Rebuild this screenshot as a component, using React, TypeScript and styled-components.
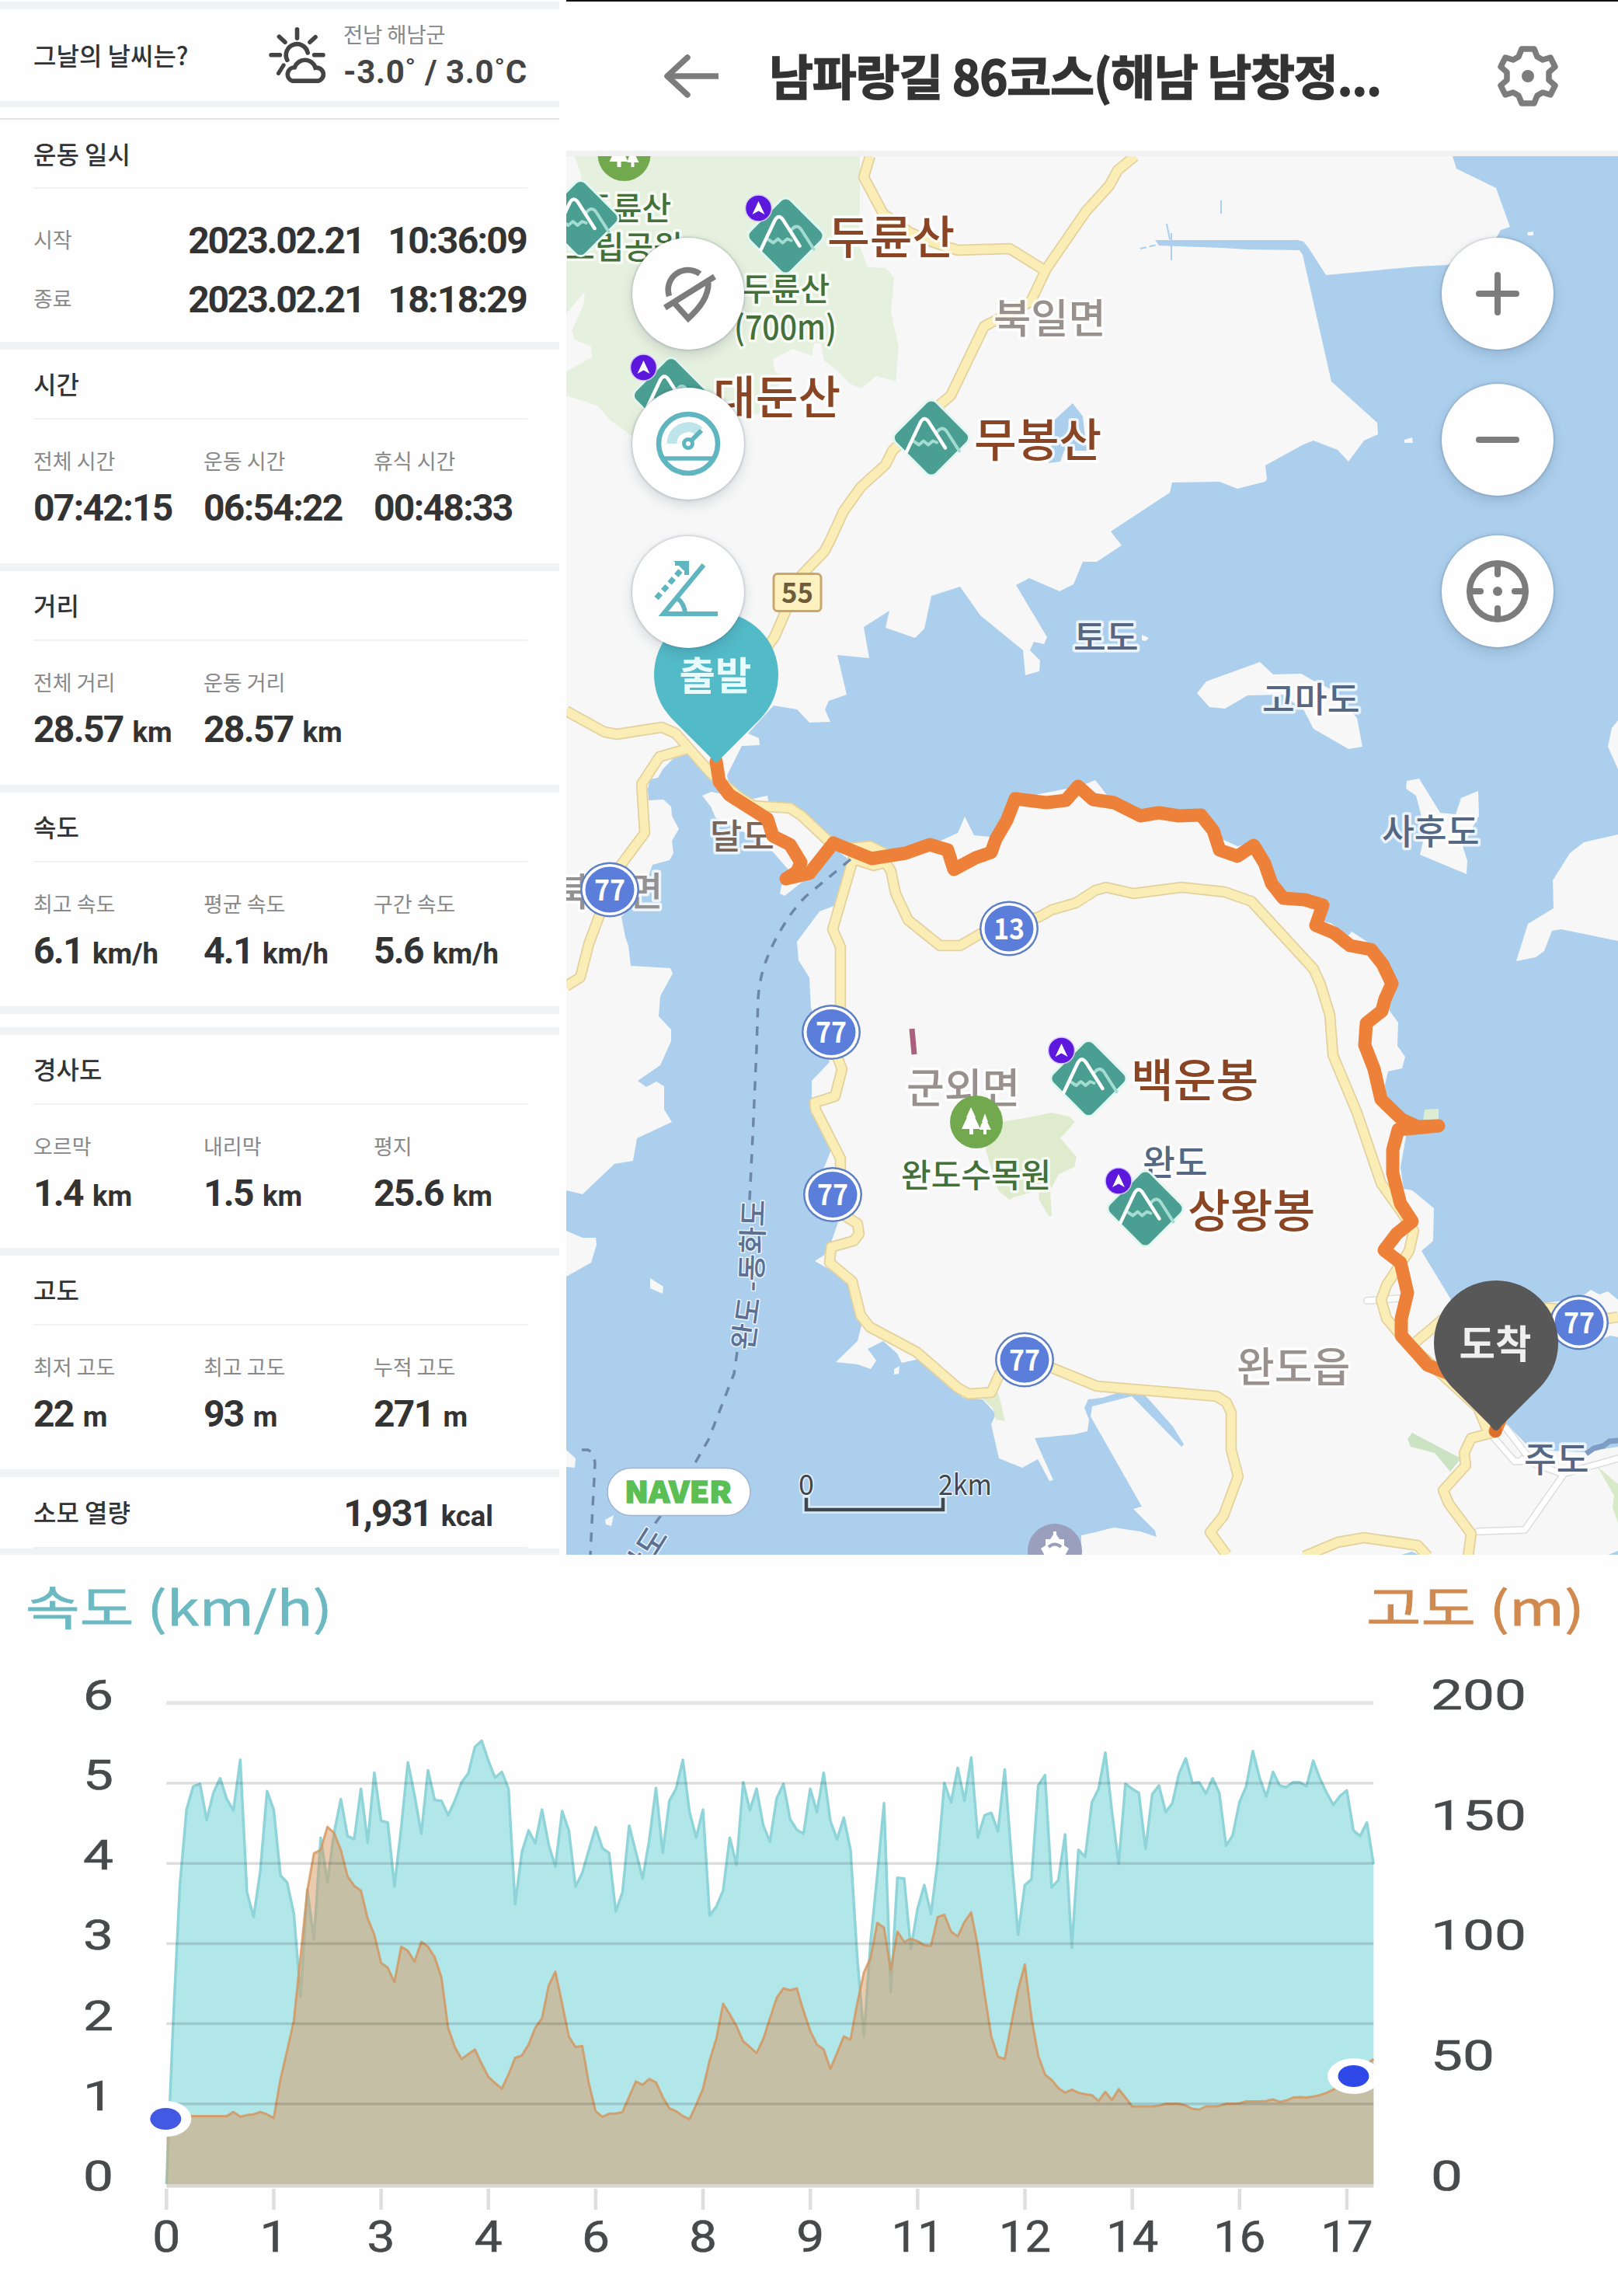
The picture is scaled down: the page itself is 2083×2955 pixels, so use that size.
import React from "react";
import styled, { createGlobalStyle } from "styled-components";

const KR = `"Noto Sans CJK KR", "Noto Sans", sans-serif`;
const NUM = `Roboto, "Noto Sans CJK KR", sans-serif`;

const GlobalStyle = createGlobalStyle`
  *, *::before, *::after { box-sizing: border-box; }
  body { margin: 0; background: #fefefe; font-family: ${KR}; color: #333; }
`;

const Page = styled.main`
  width: 2083px;
  height: 2955px;
  display: flex;
  flex-direction: column;
  overflow: hidden;
`;
const Top = styled.div`
  display: flex;
  gap: 9px;
  height: 2001px;
`;

/* ---------- stats column ---------- */
const Stats = styled.section`
  width: 720px;
  padding-top: 2px;
  display: flex;
  flex-direction: column;
`;
const Band = styled.div<{ $h?: number }>`
  height: ${(p) => p.$h ?? 10}px;
  background: #f1f2f4;
  flex: none;
`;
const Spacer = styled.div<{ $h: number; $line?: boolean }>`
  height: ${(p) => p.$h}px;
  flex: none;
  border-bottom: ${(p) => (p.$line ? "2px solid #e2e3e4" : "none")};
`;
const Weather = styled.div`
  height: 118px;
  padding: 0 41px 0 43px;
  display: flex;
  align-items: center;
`;
const Title = styled.h2`
  margin: 0;
  padding-bottom: 2px;
  font-size: 32px;
  font-weight: 500;
  line-height: 40px;
  color: #333;
  white-space: nowrap;
`;
const WeatherIcon = styled.svg`
  width: 73px;
  height: 72px;
  margin-left: auto;
  margin-right: 23px;
`;
const WeatherText = styled.div`
  width: 237px;
  padding-top: 4px;
  display: flex;
  flex-direction: column;
  gap: 2px;
`;
const Place = styled.span`
  font-size: 27.5px;
  line-height: 38px;
  letter-spacing: -0.2px;
  color: #888;
`;
const Temp = styled.span`
  font-family: ${NUM};
  font-weight: 700;
  font-size: 42px;
  line-height: 58px;
  letter-spacing: 0.6px;
  color: #444;
  white-space: nowrap;
`;
const Block = styled.section<{ $h: number }>`
  height: ${(p) => p.$h}px;
  padding: 0 41px 0 43px;
  flex: none;
`;
const BlockHead = styled.div<{ $h?: number }>`
  height: ${(p) => p.$h ?? 90}px;
  display: flex;
  align-items: center;
  border-bottom: 2px solid #f1f2f3;
`;
const Columns = styled.div`
  display: grid;
  grid-template-columns: repeat(3, 219px);
  padding-top: 33px;
`;
const Cell = styled.div`
  display: flex;
  flex-direction: column;
  gap: 11px;
`;
const Label = styled.span`
  font-size: 27px;
  line-height: 40px;
  color: #888;
  white-space: nowrap;
`;
const Value = styled.span<{ $track?: number }>`
  font-family: ${NUM};
  font-weight: 700;
  font-size: 48px;
  line-height: 60px;
  letter-spacing: ${(p) => p.$track ?? -1.7}px;
  color: #333;
  white-space: nowrap;
`;
const Unit = styled.small`
  font-size: 36.5px;
  letter-spacing: 0;
  margin-left: 12px;
`;
const TimeRow = styled.div`
  height: 76px;
  display: flex;
  align-items: center;
  gap: 31px;
  ${Label} { margin-right: auto; padding-bottom: 4px; }
`;
const TimeRows = styled.div`
  padding: 29px 1px 0 0;
`;
const Kcal = styled.div`
  height: 92px;
  margin: 0 41px 0 43px;
  padding-right: 44px;
  display: flex;
  align-items: center;
  justify-content: space-between;
  border-bottom: 2px solid #eff0f2;
  flex: none;
  ${Value} { padding-top: 7px; }
`;

type Item = { label: string; value: string; unit?: string };
const Group = ({ title, items, h = 275 }: { title: string; items: Item[]; h?: number }) => (
  <Block $h={h}>
    <BlockHead>
      <Title>{title}</Title>
    </BlockHead>
    <Columns>
      {items.map((i) => (
        <Cell key={i.label}>
          <Label>{i.label}</Label>
          <Value>
            {i.value}
            {i.unit && <Unit>{i.unit}</Unit>}
          </Value>
        </Cell>
      ))}
    </Columns>
  </Block>
);

const StatsColumn = () => (
  <Stats>
    <Band />
    <Weather>
      <Title>그날의 날씨는?</Title>
      <WeatherIcon viewBox="0 0 154 153" fill="none" stroke="#444" strokeWidth="12" strokeLinecap="round">
        <path d="M77 6V30M28 26L44 41M127 27L112 41M6 76H30M124 76H148" />
        <path d="M50 90A30 30 0 1 1 106 70" />
        <path d="M40 104L26 126" strokeWidth="11" />
        <path d="M64 147H134A18 18 0 1 0 127 111A30 30 0 0 0 70 110A19 19 0 0 0 64 147Z" stroke="#fefefe" strokeWidth="26" fill="#fefefe" />
        <path d="M64 147H134A18 18 0 1 0 127 111A30 30 0 0 0 70 110A19 19 0 0 0 64 147Z" />
      </WeatherIcon>
      <WeatherText>
        <Place>전남 해남군</Place>
        <Temp>-3.0˚ / 3.0˚C</Temp>
      </WeatherText>
    </Weather>
    <Band $h={8} />
    <Spacer $h={16} $line />
    <Block $h={286}>
      <BlockHead $h={89}>
        <Title>운동 일시</Title>
      </BlockHead>
      <TimeRows>
        <TimeRow>
          <Label>시작</Label>
          <Value $track={-2.2}>2023.02.21</Value>
          <Value>10:36:09</Value>
        </TimeRow>
        <TimeRow>
          <Label>종료</Label>
          <Value $track={-2.2}>2023.02.21</Value>
          <Value>18:18:29</Value>
        </TimeRow>
      </TimeRows>
    </Block>
    <Band />
    <Group
      title="시간"
      items={[
        { label: "전체 시간", value: "07:42:15" },
        { label: "운동 시간", value: "06:54:22" },
        { label: "휴식 시간", value: "00:48:33" },
      ]}
    />
    <Band />
    <Group
      title="거리"
      items={[
        { label: "전체 거리", value: "28.57", unit: "km" },
        { label: "운동 거리", value: "28.57", unit: "km" },
      ]}
    />
    <Band />
    <Group
      title="속도"
      items={[
        { label: "최고 속도", value: "6.1", unit: "km/h" },
        { label: "평균 속도", value: "4.1", unit: "km/h" },
        { label: "구간 속도", value: "5.6", unit: "km/h" },
      ]}
    />
    <Band />
    <Spacer $h={17} />
    <Band />
    <Group
      title="경사도"
      h={274}
      items={[
        { label: "오르막", value: "1.4", unit: "km" },
        { label: "내리막", value: "1.5", unit: "km" },
        { label: "평지", value: "25.6", unit: "km" },
      ]}
    />
    <Band />
    <Group
      title="고도"
      items={[
        { label: "최저 고도", value: "22", unit: "m" },
        { label: "최고 고도", value: "93", unit: "m" },
        { label: "누적 고도", value: "271", unit: "m" },
      ]}
    />
    <Band />
    <Kcal>
      <Title>소모 열량</Title>
      <Value>
        1,931<Unit>kcal</Unit>
      </Value>
    </Kcal>
    <Band $h={8} />
  </Stats>
);

/* ---------- map panel ---------- */
const MapPanel = styled.section`
  width: 1354px;
  display: flex;
  flex-direction: column;
`;
const MapHeader = styled.header`
  height: 201px;
  flex: none;
  display: flex;
  align-items: center;
  padding: 0 77px 1px 125px;
  border-top: 2px solid #111;
  border-bottom: 7px solid #f1f1f2;
`;
const MapTitle = styled.h1`
  margin: 0 auto 4px 64px;
  font-size: 62px;
  font-weight: 700;
  line-height: 80px;
  letter-spacing: -1.3px;
  color: #333;
  -webkit-text-stroke: 1.4px #333;
  white-space: nowrap;
`;
const HeaderIcon = styled.svg`
  display: block;
  overflow: visible;
`;
const MapArea = styled.div`
  position: relative;
  height: 1800px;
  overflow: hidden;
`;
const MapSvg = styled.svg`
  display: block;
  width: 1354px;
  height: 1800px;
`;
const Controls = styled.div<{ $left: number; $top: number }>`
  position: absolute;
  left: ${(p) => p.$left}px;
  top: ${(p) => p.$top}px;
  display: flex;
  flex-direction: column;
`;
const RoundButton = styled.button<{ $gap?: number }>`
  width: 144px;
  height: 144px;
  margin: 0 0 ${(p) => p.$gap ?? 0}px;
  padding: 0;
  border: 0;
  border-radius: 50%;
  background: #fefefe;
  box-shadow: 0 0 3px 1px rgba(60, 70, 90, 0.25), 0 7px 16px rgba(40, 60, 90, 0.16);
  svg { display: block; width: 144px; height: 144px; }
`;

const poly = (s: string) => `M${s}Z`;

const NORTH_SEA = poly(
  "1870,201 1875,217 1926,242 1944,292 1932,296 1925,308 1864,341 1824,343 1707,354 1684,318 1678,311 1671,309 1487,309 1492,316 1573,319 1605,321 1673,322 1677,328 1714,491 1773,544 1774,559 1756,567 1736,594 1722,579 1691,567 1678,572 1629,599 1631,617 1628,620 1593,629 1570,620 1509,621 1506,634 1430,684 1444,702 1412,723 1394,723 1382,752 1364,761 1325,744 1308,753 1348,820 1344,829 1331,826 1326,837 1339,850 1338,864 1320,869 1317,837 1262,792 1236,755 1199,767 1190,809 1178,821 1140,808 1145,786 1112,807 1119,847 1078,843 1090,894 1067,902 1062,913 1069,929 1042,930 1026,913 996,908 963,944 977,950 978,959 955,960 936,998 940,1015 960,1030 979,1026 988,1024 990,1034 1017,1036 1048,1056 1066,1080 1090,1088 1160,1097 1211,1082 1233,1072 1242,1051 1254,1075 1285,1078 1307,1028 1389,1012 1400,1008 1410,1004 1425,1023 1468,1043 1546,1042 1573,1080 1593,1089 1614,1086 1642,1130 1652,1153 1711,1160 1695,1184 1713,1188 1736,1204 1740,1199 1751,1206 1767,1217 1796,1262 1786,1290 1789,1301 1800,1316 1799,1346 1809,1360 1805,1375 1787,1379 1783,1396 1784,1415 1812,1437 1832,1446 1812,1452 1803,1502 1807,1530 1818,1532 1846,1555 1845,1597 1830,1610 1867,1671 1900,1800 1934,1829 1943,1836 1968,1862 2010,1876 2044,1868 2083,1862 2083,201"
);
const WEST_SEA = poly(
  "887,970 867,976 854,989 847,1001 837,1003 834,1015 835,1030 854,1029 864,1038 865,1050 874,1067 865,1082 867,1098 862,1107 840,1113 834,1130 827,1150 800,1180 805,1206 809,1217 812,1243 863,1246 866,1253 850,1282 848,1308 864,1325 864,1340 850,1371 821,1391 832,1399 845,1392 855,1398 855,1428 865,1444 820,1465 815,1494 791,1498 750,1537 729,1532 729,2001 1392,2001 1392,1976 1410,1972 1434,1966 1468,1971 1489,1978 1487,1970 1459,1942 1470,1939 1404,1823 1406,1810 1441,1801 1457,1797 1521,1862 1524,1859 1510,1836 1479,1801 1472,1794 1441,1792 1419,1799 1401,1801 1396,1812 1402,1827 1400,1842 1383,1846 1332,1851 1356,1905 1351,1906 1336,1878 1316,1889 1286,1877 1276,1833 1282,1820 1265,1801 1240,1799 1184,1749 1161,1754 1155,1742 1137,1726 1117,1736 1128,1751 1121,1762 1104,1756 1076,1753 1104,1726 1109,1706 1097,1653 1068,1634 1049,1623 1063,1614 1070,1599 1079,1573 1050,1530 1070,1480 1048,1428 1045,1413 1045,1391 1068,1367 1044,1297 1042,1258 1028,1236 1026,1212 1055,1173 1076,1165 1095,1108 1072,1090 1042,1128 1010,1153 1004,1150 1006,1140 1020,1125 985,1085 921,1052 915,1038 904,1024 916,1019 939,1024 925,1008"
);
const FOREST = poly(
  "740,201 1107,201 1107,268 1105,312 1117,344 1140,345 1151,357 1147,402 1157,446 1153,491 1128,484 1108,500 1093,493 1079,478 1061,464 1057,442 1048,442 1045,458 1021,449 995,462 997,478 1008,484 985,530 930,545 850,575 812,560 787,542 769,522 729,509 729,478 762,460 761,446 740,437 736,426 751,393 753,375 729,404 729,260 749,228"
);
const ISLANDS = [
  "1541,892 1553,877 1622,852 1639,868 1675,867 1691,876 1713,887 1747,924 1754,961 1736,964 1691,938 1678,913 1651,894 1606,895 1577,912 1557,910",
  "1811,1005 1827,1002 1854,1046 1874,1048 1881,1027 1903,1018 1904,1050 1883,1089 1889,1108 1888,1125 1828,1100 1835,1070 1823,1024 1810,1015",
  "2083,1074 2039,1084 2021,1098 1999,1133 2000,1169 1967,1189 1952,1237 1977,1232 1988,1224 1998,1198 2010,1196 2083,1211",
  "2083,927 2075,937 2070,961 2083,990",
  "729,1584 750,1593 767,1593 768,1602 761,1625 729,1643",
  "837,1645 854,1656 853,1665 837,1658",
  "729,1866 741,1877 740,1889 729,1888",
  "1470,817 1479,821 1475,825 1470,824",
  "1966,299 1974,298 1974,303 1967,303",
  "1808,566 1818,563 1819,570 1808,570",
  "1151,1762 1158,1758 1157,1768 1151,1769",
  "779,1956 790,1950 787,1964 780,1962",
  "1960,1680 2032,1672 2048,1660 2059,1666 2070,1662 2083,1673 2083,1721 2073,1719 2052,1728 1960,1725",
  "2083,1868 2060,1870 1968,1866 1980,1882 2083,1885",
].map(poly);
const GREENS: [string, string][] = [
  ["1269,1480 1275,1455 1294,1443 1320,1439 1354,1432 1376,1437 1384,1444 1365,1465 1386,1489 1383,1502 1363,1511 1352,1532 1354,1565 1350,1565 1338,1545 1337,1532 1305,1541 1300,1544 1285,1532", "#deebcd"],
  ["1264,1799 1285,1792 1294,1829 1282,1827 1278,1812", "#deebcd"],
  ["1818,1844 1812,1852 1816,1862 1847,1870 1867,1894 1881,1877 1852,1862", "#cce3c3"],
  ["1834,1428 1852,1427 1852,1443 1832,1443", "#dcecd0"],
  ["2057,1888 2083,1910 2083,1960 2076,1940 2078,1925", "#d6eac8"],
];
const ROADS = [
  "1120,201 1112,228 1137,275 1171,299 1202,312 1233,322 1300,320 1345,348",
  "1461,201 1439,219 1428,239 1398,272 1347,346 1327,388 1267,420 1224,509 1211,520 1149,580 1140,598 1108,627 1086,658 1068,697 1061,710 1032,740 1010,790 997,820 975,850",
  "729,915 778,942 794,945 852,936 870,944 916,996 952,1026 970,1037 1017,1040 1032,1050 1066,1082 1090,1092 1120,1089 1142,1100",
  "887,963 849,974 826,1009 830,1072 798,1115 771,1180 758,1215 747,1258 729,1269",
  "1100,1100 1072,1196 1082,1219 1082,1297 1074,1350 1084,1376 1075,1411 1049,1419 1050,1428 1082,1491 1082,1506 1080,1560 1104,1575 1106,1588 1099,1597 1070,1605 1068,1625 1097,1649 1108,1693 1120,1708 1180,1740 1233,1786 1247,1794 1276,1792 1287,1768 1318,1746 1358,1762 1412,1784 1566,1797 1579,1805 1585,1818 1585,1866 1594,1900 1575,1951 1558,1972 1579,2001",
  "1100,1106 1125,1114 1140,1110 1147,1121 1153,1150 1169,1184 1210,1217 1236,1217 1262,1202 1338,1180 1354,1171 1385,1162 1410,1146 1424,1142 1459,1150 1521,1142 1577,1148 1611,1160 1691,1247 1700,1267 1712,1306 1716,1358 1747,1432 1778,1523 1803,1558 1820,1584 1814,1610 1785,1654 1778,1673 1785,1697 1807,1723 1865,1777 1903,1812 1916,1844",
  "1823,1727 1856,1699 1920,1680 1999,1684 2070,1697 2083,1695",
  "1925,1843 1894,1851 1885,1870 1887,1886 1858,1918 1865,1935 1894,1974 1890,2003",
  "1679,2003 1722,1985 1756,1979 1825,1989 1838,2003",
];
const WHITE_ROADS = [
  "1760,1674 1800,1671",
  "1923,1850 1950,1881 1965,1880",
  "1939,1838 1965,1872",
  "1903,1971 1963,1969 2012,1899",
  "1960,1878 2012,1897 2044,1888 2083,1877",
];
const ROUTE =
  "922,980 926,1006 939,1023 988,1054 995,1076 1017,1087 1031,1110 1026,1122 1012,1131 1042,1124 1073,1085 1122,1105 1166,1098 1197,1087 1220,1094 1228,1119 1256,1104 1276,1097 1282,1080 1296,1056 1307,1028 1347,1033 1372,1030 1388,1012 1407,1029 1434,1033 1468,1050 1492,1046 1517,1050 1546,1049 1562,1069 1570,1094 1593,1102 1614,1088 1628,1111 1637,1137 1652,1156 1680,1158 1703,1165 1694,1191 1718,1201 1738,1217 1765,1222 1780,1241 1792,1266 1783,1286 1779,1301 1759,1317 1757,1345 1769,1376 1778,1415 1805,1441 1825,1450 1852,1449 1800,1454 1793,1480 1793,1510 1803,1549 1818,1572 1798,1588 1782,1609 1803,1625 1812,1664 1804,1697 1804,1719 1838,1757 1865,1768 1900,1800 1932,1825 1925,1842";

const MapLabel = styled.text<{ $c: string; $s: number; $w?: number; $halo?: number }>`
  font-family: ${KR};
  font-size: ${(p) => p.$s}px;
  font-weight: ${(p) => p.$w ?? 500};
  fill: ${(p) => p.$c};
  stroke: rgba(255, 255, 255, 0.8);
  stroke-width: ${(p) => p.$halo ?? 7}px;
  stroke-linejoin: round;
  paint-order: stroke;
`;

const Mountain = ({ x, y }: { x: number; y: number }) => (
  <g transform={`translate(${x} ${y})`} fill="none" strokeLinecap="round" strokeLinejoin="round">
    <rect x="-37" y="-37" width="74" height="74" rx="9" transform="rotate(45)" fill="#4a9f92" stroke="#e3f7f1" strokeWidth="3" />
    <path d="M-22 5L-16 9L-10 4L-4 9L2 4L7 6" stroke="#a4dcd2" strokeWidth="4" />
    <path d="M7 -7C11 -13 16 -14 20 -8L36 17" stroke="#a4dcd2" strokeWidth="4" />
    <path d="M-32 18L-14 -20Q-9 -29 -3 -20L18 13" stroke="#fff" strokeWidth="4.5" />
  </g>
);
const NavDot = ({ x, y }: { x: number; y: number }) => (
  <g transform={`translate(${x} ${y})`}>
    <circle r="17" fill="#5c18dc" stroke="#d9c8ff" strokeWidth="1.5" />
    <path d="M0 -9L8 8L0 3.500L-8 8Z" fill="#fff" />
  </g>
);
const Shield = ({ x, y, n }: { x: number; y: number; n: string }) => (
  <g transform={`translate(${x} ${y})`}>
    <ellipse rx="38" ry="35.500" fill="#5d7fc4" />
    <ellipse rx="35.500" ry="33" fill="#fff" />
    <ellipse rx="31.500" ry="29.500" fill="#5b7edb" />
    <text y="13.500" textAnchor="middle" fontFamily={KR} fontWeight="700" fontSize="37" fill="#fff" textLength="40" lengthAdjust="spacingAndGlyphs">
      {n}
    </text>
  </g>
);
const Trees = ({ x, y }: { x: number; y: number }) => (
  <g transform={`translate(${x} ${y})`}>
    <circle r="34" fill="#72a94f" />
    <path d="M-7 -19L-1 -6H-2L5 9H-4V16H-9V9H-19L-12 -6H-13ZM11 -11L15 0H14L19 10H13V16H9V10H4L6 3L8 0H7Z" fill="#fff" />
  </g>
);
const Pin = ({ x, y, color, text, textColor }: { x: number; y: number; color: string; text: string; textColor: string }) => (
  <g transform={`translate(${x} ${y})`}>
    <path d="M0 113C-3 113 -5 110 -8 106L-57 57C-72 41 -80 22 -80 0A80 80 0 0 1 80 0C80 22 72 41 57 57L8 106C5 110 3 113 0 113Z" fill={color} />
    <text x="-1" y="20" textAnchor="middle" fontFamily={KR} fontWeight="700" fontSize="50.500" fill={textColor}>
      {text}
    </text>
  </g>
);

const BROWN = "#8a4524";
const GREY = "#98918e";
const NAVY = "#566784";
const GREEN = "#44703a";

const MapDrawing = () => (
  <MapSvg viewBox="729 201 1354 1800" fill="none">
    <rect x="729" y="201" width="1354" height="1800" fill="#f7f7f7" />
    <path d={FOREST} fill="#e6f0de" />
    <path d={NORTH_SEA} fill="#accfed" />
    <path d={WEST_SEA} fill="#accfed" />
    <path d={poly("1381,519 1394,536 1399,580 1370,580 1365,594 1350,596 1358,540")} fill="#accfed" />
    <path d="M1572 258V275M1508 300V335M1502 288L1506 308" stroke="#accfed" strokeWidth="2" />
    <path d="M1468 320L1490 315" stroke="#accfed" strokeWidth="2" strokeDasharray="8 4" />
    {ISLANDS.map((d) => (
      <path key={d} d={d} fill="#f7f7f7" />
    ))}
    {GREENS.map(([d, c]) => (
      <path key={d} d={poly(d)} fill={c} />
    ))}
    <path d="M2042 1871L2052 1864L2064 1861L2072 1855L2084 1854" stroke="#7f9dc4" strokeWidth="7" />
    <path d="M1797 2003L1818 1997L1830 2003ZM2066 2003L2083 1996V2003Z" fill="#accfed" />
    <g strokeLinejoin="round" strokeLinecap="round">
      {WHITE_ROADS.map((d) => (
        <path key={d} d={`M${d}`} stroke="#dcdcdc" strokeWidth="10" />
      ))}
      {WHITE_ROADS.map((d) => (
        <path key={d} d={`M${d}`} stroke="#fff" strokeWidth="7" />
      ))}
    </g>
    <g strokeLinejoin="round">
      {ROADS.map((d) => (
        <path key={d} d={`M${d}`} stroke="#e3d19d" strokeWidth="14.500" />
      ))}
      {ROADS.map((d) => (
        <path key={d} d={`M${d}`} stroke="#fbedb6" strokeWidth="11" />
      ))}
    </g>
    <g stroke="#6c87ab" strokeWidth="3.500" strokeDasharray="12 11.500">
      <path d="M1095 1106L1037 1154Q1020 1172 1010 1189Q995 1213 988 1232Q978 1256 976 1285L974 1350L969 1463L965 1545" />
      <path d="M949 1740L945 1768L912 1853L892 1888L849 1953L838 1968" />
      <path d="M749 1866H757Q765 1870 766 1884L763 1940L760 2001" />
    </g>
    <path d="M1174 1324L1177 1357" stroke="#a9617d" strokeWidth="7" />

    <MapLabel x="914" y="1093" $s={45} $c="#7c6554">달도</MapLabel>
    <MapLabel x="713" y="1166" $s={51} $c="#939191">북평면</MapLabel>
    <g strokeLinejoin="round" strokeLinecap="round">
      <path d={`M${ROUTE}`} stroke="#ed8139" strokeWidth="17" />
    </g>

    <MapLabel x="751" y="283" $s={41} $c={GREEN}>두륜산</MapLabel>
    <MapLabel x="728" y="333" $s={41} $c={GREEN}>도립공원</MapLabel>
    <MapLabel x="955" y="387" $s={41} $c={GREEN}>두륜산</MapLabel>
    <MapLabel x="945" y="437" $s={43} $c={GREEN} textLength="132" lengthAdjust="spacingAndGlyphs">(700m)</MapLabel>
    <MapLabel x="1279" y="429" $s={52.5} $c={GREY}>북일면</MapLabel>
    <MapLabel x="1382" y="837" $s={45.5} $c={NAVY}>토도</MapLabel>
    <MapLabel x="1625" y="917" $s={45.5} $c={NAVY}>고마도</MapLabel>
    <MapLabel x="1779" y="1087" $s={45.5} $c={NAVY}>사후도</MapLabel>
    <MapLabel x="1471" y="1513" $s={45.5} $c={NAVY}>완도</MapLabel>
    <MapLabel x="1962" y="1895" $s={45.5} $c={NAVY}>주도</MapLabel>
    <MapLabel x="1592" y="1779" $s={53} $c={GREY}>완도읍</MapLabel>
    <MapLabel x="1167" y="1420" $s={53} $c={GREY}>군외면</MapLabel>
    <MapLabel x="1160" y="1528" $s={42} $c={GREEN}>완도수목원</MapLabel>

    <MapLabel $s={37} $c="#5c7093" $halo={3} textAnchor="middle" dominantBaseline="central" transform="translate(958 1703) rotate(-82)">완도</MapLabel>
    <MapLabel $s={38} $c="#5c7093" $halo={3} textAnchor="middle" dominantBaseline="central" transform="translate(966 1603) rotate(-88)">-동화도</MapLabel>
    <MapLabel $s={40} $c="#5c7093" $halo={3} textAnchor="middle" dominantBaseline="central" transform="translate(827 1999) rotate(-58)">완도</MapLabel>

    <Trees x={803.5} y={199} />
    <Trees x={1257} y={1444} />
    <circle cx="1358" cy="1996" r="35" fill="#999fbc" />
    <path d="M1340 1993L1346 1989V1981H1352L1356 1975V1971H1360V1975L1364 1981H1370V1989L1376 1993L1371 2002H1345Z" fill="#fff" />
    <path d="M1350 1991Q1358 1984 1366 1991" stroke="#999fbc" strokeWidth="4" />

    <Mountain x={747.5} y={281} />
    <Mountain x={1011.5} y={303.5} />
    <Mountain x={864} y={509} />
    <Mountain x={1199} y={563.5} />
    <Mountain x={1401.5} y={1388} />
    <Mountain x={1474.5} y={1555.5} />
    <NavDot x={976.5} y={268} />
    <NavDot x={828.5} y={473} />
    <NavDot x={1366.5} y={1352} />
    <NavDot x={1440} y={1520} />
    <MapLabel x="1065" y="327" $s={59.5} $c={BROWN}>두륜산</MapLabel>
    <MapLabel x="918" y="533" $s={59.5} $c={BROWN}>대둔산</MapLabel>
    <MapLabel x="1254" y="588" $s={59.5} $c={BROWN}>무봉산</MapLabel>
    <MapLabel x="1456" y="1412" $s={59.5} $c={BROWN}>백운봉</MapLabel>
    <MapLabel x="1529" y="1580" $s={59.5} $c={BROWN}>상왕봉</MapLabel>

    <rect x="996" y="738.500" width="61" height="48" rx="5" fill="#fdf1c0" stroke="#c9a76c" strokeWidth="3" />
    <text x="1026.500" y="776" textAnchor="middle" fontFamily={KR} fontWeight="700" fontSize="36" fill="#6f5c3b" textLength="41" lengthAdjust="spacingAndGlyphs">55</text>
    <Shield x={785} y={1145} n="77" />
    <Shield x={1299} y={1195} n="13" />
    <Shield x={1070} y={1328.5} n="77" />
    <Shield x={1072} y={1537.5} n="77" />
    <Shield x={1319} y={1750} n="77" />
    <Shield x={2033} y={1702} n="77" />

    <Pin x={922} y={868} color="#53bac7" text="출발" textColor="#e9fbfc" />
    <circle cx="1925.500" cy="1842" r="8" fill="#de6f2b" />
    <Pin x={1926} y={1728} color="#585858" text="도착" textColor="#efefef" />

    <rect x="782" y="1889.500" width="184" height="61" rx="30.500" fill="#fff" stroke="#9fb4cf" strokeWidth="1.500" />
    <text x="804" y="1934" fontFamily={KR} fontWeight="900" fontSize="38" fill="#5bbf55" stroke="#5bbf55" strokeWidth="1.500" textLength="138" lengthAdjust="spacingAndGlyphs">NAVER</text>

    <path d="M1038 1930V1943H1214V1930" stroke="#d9ebf8" strokeWidth="10" strokeLinecap="square" />
    <path d="M1038 1930V1943H1214V1930" stroke="#3f4750" strokeWidth="4.500" strokeLinecap="square" />
    <MapLabel x="1028" y="1924" $s={36} $c="#3f4750" $w={400} $halo={3}>0</MapLabel>
    <MapLabel x="1208" y="1924" $s={36} $c="#3f4750" $w={400} $halo={3} textLength="69" lengthAdjust="spacingAndGlyphs">2km</MapLabel>
  </MapSvg>
);

const ICON = "#7c7c7c";
const TEAL = "#5fb5c0";

const MapSide = () => (
  <MapPanel>
    <MapHeader>
      <HeaderIcon width="72" height="60" viewBox="0 0 72 60" fill="none" stroke={ICON} strokeWidth="7.500" strokeLinejoin="round">
        <path d="M5 30H71" />
        <path d="M31 6L5 30L31 54" strokeLinecap="round" />
      </HeaderIcon>
      <MapTitle>남파랑길 86코스(해남 남창정...</MapTitle>
      <HeaderIcon width="78" height="78" viewBox="-39 -39 78 78" fill="none" stroke={ICON} strokeWidth="7.500" strokeLinejoin="round">
        <path d="M-8 -35H8L12 -25L19 -21L29 -24L35 -12L27 -5V5L35 12L29 24L19 21L12 25L8 35H-8L-12 25L-19 21L-29 24L-35 12L-27 5V-5L-35 -12L-29 -24L-19 -21L-12 -25Z" />
        <circle r="8" fill={ICON} stroke="none" />
      </HeaderIcon>
    </MapHeader>
    <MapArea>
      <MapDrawing />
      <Controls $left={85} $top={105}>
        <RoundButton $gap={49}>
          <svg viewBox="-72 -72 144 144" fill="none" stroke={ICON} strokeWidth="7.500">
            <path d="M-24.500 3A25.500 25.500 0 0 1 15 -25.500" />
            <path d="M-30 18L34 -22" />
            <path d="M-17 13L0 32C15 18 26 4 26 -14" />
          </svg>
        </RoundButton>
        <RoundButton $gap={47}>
          <svg viewBox="-72 -72 144 144" fill="none" stroke={TEAL} strokeWidth="6.500">
            <path d="M-21 0A21 21 0 0 1 14 -16" stroke="#bfe4e9" strokeWidth="13" />
            <circle r="38" />
            <path d="M-33 19H33" strokeWidth="5.500" />
            <circle r="5.500" strokeWidth="5" />
            <path d="M4 -4L17 -17" strokeWidth="6" />
          </svg>
        </RoundButton>
        <RoundButton>
          <svg viewBox="-72 -72 144 144" fill="none" stroke={TEAL} strokeWidth="6">
            <path d="M20 -35L-32 28H38" />
            <path d="M-14 8Q-5 15 -4 27" />
            <path d="M-41 8L-6 -32" strokeWidth="7" strokeDasharray="8 5" />
            <path d="M-19 -40H1V-22L-6 -28L-12 -34Z" fill={TEAL} stroke="none" />
            <path d="M-17 -37H-2V-22" />
          </svg>
        </RoundButton>
      </Controls>
      <Controls $left={1126.5} $top={105}>
        <RoundButton $gap={44}>
          <svg viewBox="-72 -72 144 144" stroke={ICON} strokeWidth="8" strokeLinecap="round">
            <path d="M-24 0H24M0 -24V24" />
          </svg>
        </RoundButton>
        <RoundButton $gap={51}>
          <svg viewBox="-72 -72 144 144" stroke={ICON} strokeWidth="8" strokeLinecap="round">
            <path d="M-24 0H24" />
          </svg>
        </RoundButton>
        <RoundButton>
          <svg viewBox="-72 -72 144 144" fill="none" stroke={ICON} strokeWidth="8" strokeLinecap="round">
            <circle r="36" />
            <path d="M0 -34V-22M0 34V22M-34 0H-22M34 0H22" />
            <circle r="6" fill={ICON} stroke="none" />
          </svg>
        </RoundButton>
      </Controls>
    </MapArea>
  </MapPanel>
);

/* ---------- speed / altitude chart ---------- */
const SPEED = [
  0, 2.0, 3.73, 4.67, 4.96, 4.99, 4.54, 4.88, 5.06, 4.8, 4.66, 5.29, 3.64, 3.33, 3.91, 4.9, 4.67, 3.85, 3.76, 3.37,
  2.34, 3.67, 3.05, 4.32, 3.76, 4.38, 4.8, 4.34, 4.3, 4.93, 4.26, 5.13, 4.53, 4.51, 3.71, 4.44, 5.26, 4.85, 4.37, 5.16,
  4.79, 4.78, 4.6, 4.78, 5.01, 5.12, 5.45, 5.53, 5.28, 5.07, 5.14, 4.93, 3.49, 4.14, 4.41, 4.25, 4.67, 4.23, 3.96, 4.65,
  4.41, 3.71, 3.88, 4.17, 4.45, 4.19, 4.13, 3.4, 3.64, 4.47, 4.14, 3.81, 4.29, 4.94, 4.13, 4.78, 4.93, 5.29, 4.64, 4.32,
  4.67, 3.35, 3.46, 3.66, 4.32, 3.98, 5.01, 4.66, 4.93, 4.47, 4.27, 4.81, 4.99, 4.55, 4.42, 4.37, 4.93, 4.64, 5.13, 4.53,
  4.3, 4.57, 4.17, 2.84, 1.84, 3.02, 3.85, 4.75, 2.39, 3.82, 3.81, 2.93, 3.43, 3.73, 3.37, 4.02, 5.0, 4.76, 5.19, 4.78,
  5.32, 4.32, 4.6, 4.63, 4.4, 5.17, 4.08, 3.11, 3.73, 3.8, 4.97, 5.1, 3.7, 3.79, 4.36, 2.95, 4.17, 4.08, 4.76, 4.93,
  5.38, 4.64, 3.99, 4.99, 4.93, 4.88, 4.18, 4.86, 4.97, 4.64, 4.75, 5.12, 5.31, 5.0, 5.01, 4.87, 5.06, 4.88, 4.22, 4.35,
  4.76, 4.96, 5.4, 5.07, 4.83, 5.14, 4.97, 4.95, 5.01, 5.01, 4.96, 5.28, 5.06, 4.88, 4.73, 4.84, 4.91, 4.41, 4.34, 4.51,
  3.99,
];
const ALTITUDE = [
  28, 28, 28, 28.3, 28.3, 28.3, 28.3, 28.3, 28.3, 28.3, 30, 28, 28.7, 29, 30, 29, 27.5, 43.7, 55.5, 68,
  95, 122, 137.5, 139, 148.5, 146, 139, 128, 124, 122, 110.5, 103.7, 92, 90, 84, 98.7, 97, 92.5, 100.7, 98.7,
  94.4, 86, 65, 57, 52, 54, 56, 50, 44.6, 42, 39.7, 45.6, 52.5, 53.5, 58, 65, 69, 82.6, 88.3, 75,
  61.4, 57, 57.4, 41.7, 30.3, 28, 29.3, 29.3, 30, 36.4, 42.7, 41.3, 43.7, 42.3, 36.2, 31.5, 30.3, 28.3, 27, 33,
  39.7, 51.5, 60.4, 75, 70.6, 65.7, 59.4, 57, 54.5, 60.4, 69, 77.5, 81.4, 80.6, 81.4, 72, 63.7, 58, 56, 48,
  54.5, 61.4, 60, 75, 88, 94, 108.6, 106.6, 89, 105, 100.7, 102, 101, 99.3, 99, 111, 112, 105, 103, 109,
  113, 98.7, 79, 61.4, 53, 52, 67, 81, 91.3, 69, 53.5, 45.6, 43.3, 40, 38, 39.3, 38, 37.4, 37, 34.6,
  38.4, 35, 39.5, 36, 32.3, 32.3, 32.3, 32.3, 32.6, 33.4, 33.4, 33.4, 32.7, 31.3, 31, 32.3, 32.3, 32.5, 33.4, 33.4,
  33.6, 34.4, 34.4, 34.4, 34.6, 35.2, 34.2, 34.8, 36, 36.2, 36, 36.4, 37, 38, 39.3, 41, 43, 45, 48, 50,
  52,
];
const X0 = 214.3;
const X1 = 1768.3;
const Y0 = 810;
const UNIT_H = 103.2;
const line = (data: number[], max: number) =>
  data
    .map((v, i) => `${(X0 + ((X1 - X0) * i) / 180).toFixed(1)},${(Y0 - (v / max) * 6 * UNIT_H).toFixed(1)}`)
    .join(" ");
const area = (pts: string) => `M${X0},${Y0} ${pts} ${X1},${Y0}Z`;

const ChartBox = styled.section`
  height: 954px;
`;
const ChartSvg = styled.svg`
  display: block;
  width: 2083px;
  height: 954px;
`;
const AxisText = styled.text<{ $s: number }>`
  font-family: Roboto, sans-serif;
  font-size: ${(p) => p.$s}px;
  fill: #47494b;
  stroke: #47494b;
  stroke-width: 0.6px;
`;
const AxisTitle = styled.text<{ $c: string }>`
  font-family: ${KR};
  font-size: 60px;
  font-weight: 400;
  fill: ${(p) => p.$c};
  stroke: ${(p) => p.$c};
  stroke-width: 0.8px;
`;

const Chart = () => {
  const speed = line(SPEED, 6);
  const alt = line(ALTITUDE, 200);
  return (
    <ChartBox>
      <ChartSvg viewBox="0 0 2083 954" fill="none">
        <AxisTitle x="33" y="91" $c="#6cb9c1" textLength="395" lengthAdjust="spacingAndGlyphs">속도 (km/h)</AxisTitle>
        <AxisTitle x="1759" y="91" $c="#d0894f" textLength="281" lengthAdjust="spacingAndGlyphs">고도 (m)</AxisTitle>
        {[0, 1, 2, 3, 4, 5, 6].map((n) => (
          <AxisText key={n} $s={53} x="107" y={818 - n * 103.2} textLength="39" lengthAdjust="spacingAndGlyphs">
            {n}
          </AxisText>
        ))}
        {[0, 50, 100, 150, 200].map((n) => (
          <AxisText key={n} $s={53} x="1842" y={818 - n * 3.096} textLength={String(n).length * 41} lengthAdjust="spacingAndGlyphs">
            {n}
          </AxisText>
        ))}
        <path d={area(speed)} fill="#b2e7ea" />
        <polyline points={speed} stroke="#8fd4d9" strokeWidth="3.500" strokeLinejoin="round" />
        <path d={area(alt)} fill="#d69860" fillOpacity="0.5" />
        <polyline points={alt} stroke="#d5945a" strokeOpacity="0.8" strokeWidth="3" strokeLinejoin="round" />
        {[1, 2, 3, 4, 5].map((n) => (
          <path key={n} d={`M${X0} ${Y0 - n * UNIT_H}H${X1}`} stroke="#000" strokeOpacity="0.13" strokeWidth="3.500" />
        ))}
        <path d={`M${X0} ${Y0 - 6 * UNIT_H}H${X1}`} stroke="#e6e6e6" strokeWidth="5" />
        <path d={`M${X0} ${Y0 + 2}H${X1}`} stroke="#c9c8bc" strokeOpacity="0.7" strokeWidth="5" />
        {[0, 1, 3, 4, 6, 8, 9, 11, 12, 14, 16, 17].map((n, i) => {
          const x = X0 + i * 138.15;
          return (
            <g key={n}>
              <path d={`M${x} 816V843`} stroke="#dedede" strokeWidth="4.500" />
              <AxisText $s={56} x={x} y={897} textAnchor="middle" textLength={n > 9 ? 67 : 36} lengthAdjust="spacingAndGlyphs">
                {n}
              </AxisText>
            </g>
          );
        })}
        <ellipse cx="214.300" cy="726" rx="32" ry="23" fill="#fff" />
        <ellipse cx="213.300" cy="726" rx="20" ry="14" fill="#4359e4" />
        <ellipse cx="1743" cy="671" rx="34" ry="23" fill="#fff" />
        <ellipse cx="1742.500" cy="671" rx="20" ry="14" fill="#2f49e8" />
      </ChartSvg>
    </ChartBox>
  );
};

export default function App() {
  return (
    <>
      <GlobalStyle />
      <Page>
        <Top>
          <StatsColumn />
          <MapSide />
        </Top>
        <Chart />
      </Page>
    </>
  );
}
